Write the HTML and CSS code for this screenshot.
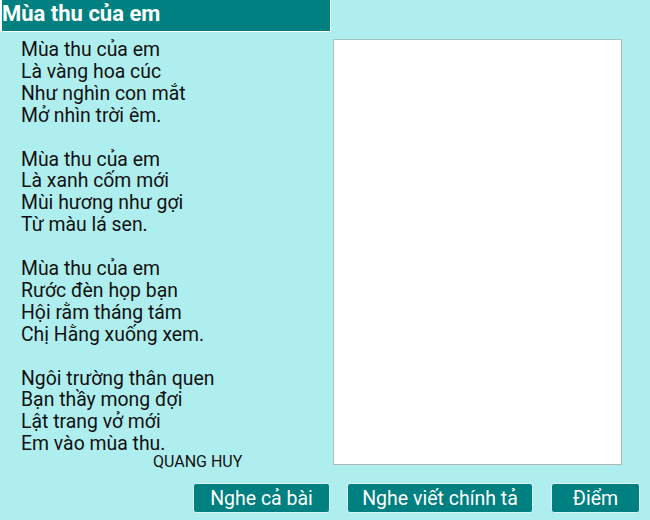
FILE: index.html
```html
<!DOCTYPE html>
<html lang="vi">
<head>
    <meta charset="UTF-8">
    <title>Mùa thu của em</title>
    <link rel="stylesheet" href="styles.css">
</head>
<body>

<div class="title">Mùa thu của em</div>

<div class="main">
    <div class="poem">
        <p class="stanza">Mùa thu của em<br>Là vàng hoa cúc<br>Như nghìn con mắt<br>Mở nhìn trời êm.</p>
        <p class="stanza">Mùa thu của em<br>Là xanh cốm mới<br>Mùi hương như gợi<br>Từ màu lá sen.</p>
        <p class="stanza">Mùa thu của em<br>Rước đèn họp bạn<br>Hội rằm tháng tám<br>Chị Hằng xuống xem.</p>
        <p class="stanza">Ngôi trường thân quen<br>Bạn thầy mong đợi<br>Lật trang vở mới<br>Em vào mùa thu.</p>
        <div class="author">QUANG HUY</div>
    </div>
    <textarea id="answer" class="answer"></textarea>
</div>

<div class="actions">
    <button id="btnListen" class="btn">Nghe cả bài</button>
    <button id="btnDictation" class="btn">Nghe viết chính tả</button>
    <button id="btnScore" class="btn btn-score">Điểm</button>
</div>

</body>
</html>
```

FILE: styles.css
```css
body {
    margin: 0;
    background-color: #afeeee;
    font-family: Roboto, "Noto Sans", sans-serif;
    color: #111;
    width: 650px;
    height: 520px;
    overflow: hidden;
}

.title {
    width: 331px;
    height: 32px;
    box-sizing: border-box;
    background-color: #008080;
    color: #fff;
    border: 1px solid #fff;
    border-top: none;
    border-left-width: 2px;
    font-size: 22px;
    font-weight: bold;
    line-height: 27px;
}

.main {
    display: flex;
    align-items: flex-start;
}

.poem {
    width: 333px;
    box-sizing: border-box;
    padding: 7px 0 0 21px;
}

.stanza {
    margin: 0 0 21.9px;
    font-size: 19.4px;
    line-height: 21.9px;
}

.stanza:nth-last-of-type(1) {
    margin-bottom: 0;
}

.author {
    margin: -2px 0 0 132px;
    font-size: 16px;
    line-height: 17px;
}

.answer {
    width: 289px;
    height: 426px;
    box-sizing: border-box;
    margin: 7px 0 0;
    padding: 2px;
    border: 1px solid #b4b4b4;
    border-top-color: #a4c4c4;
    border-left-color: #a4c4c4;
    background-color: #fff;
    resize: none;
}

.actions {
    display: flex;
    justify-content: flex-end;
    gap: 17px;
    padding-right: 10px;
    margin-top: 13px;
}

.btn {
    height: 30px;
    padding: 0 6px;
    background-color: #008080;
    color: #fff;
    border: 1px solid #d8f4f4;
    border-radius: 3px;
    font-family: Roboto, "Noto Sans", sans-serif;
    font-size: 19.5px;
    cursor: pointer;
}

#btnListen {
    width: 137px;
}

#btnDictation {
    width: 186px;
    margin-right: 1px;
}

.btn-score {
    width: 89px;
}
```
